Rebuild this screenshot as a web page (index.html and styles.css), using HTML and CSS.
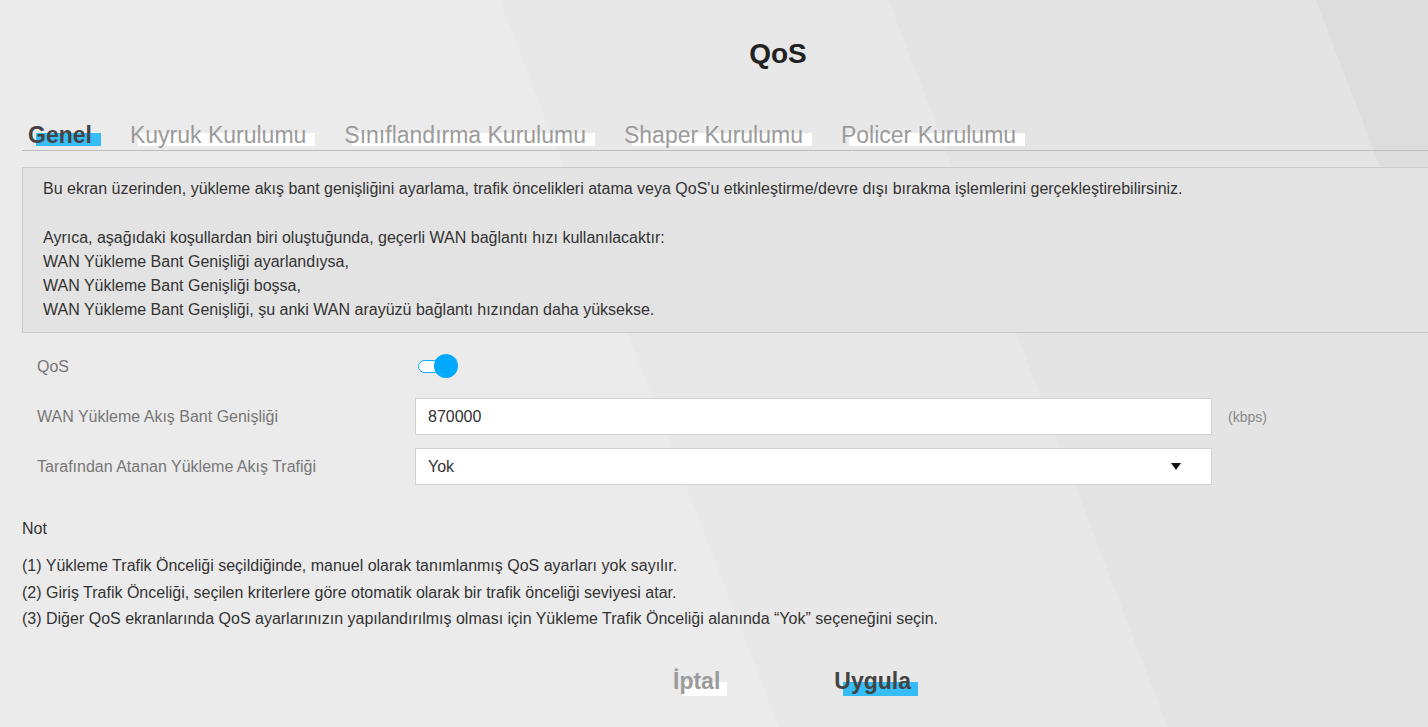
FILE: index.html
```html
<!DOCTYPE html>
<html lang="tr">
<head>
    <meta charset="UTF-8" />
    <meta name="viewport" content="width=device-width, initial-scale=1" />
    <title>QoS</title>
    <link rel="stylesheet" href="styles.css">
</head>
<body>
<div class="page">
    <h1 class="title">QoS</h1>

    <ul class="tabs">
        <li class="tab active">Genel</li>
        <li class="tab">Kuyruk Kurulumu</li>
        <li class="tab">Sınıflandırma Kurulumu</li>
        <li class="tab">Shaper Kurulumu</li>
        <li class="tab">Policer Kurulumu</li>
    </ul>

    <div class="intro">
        <p>Bu ekran üzerinden, yükleme akış bant genişliğini ayarlama, trafik öncelikleri atama veya QoS'u etkinleştirme/devre dışı bırakma işlemlerini gerçekleştirebilirsiniz.</p>
        <p>Ayrıca, aşağıdaki koşullardan biri oluştuğunda, geçerli WAN bağlantı hızı kullanılacaktır:<br>
            WAN Yükleme Bant Genişliği ayarlandıysa,<br>
            WAN Yükleme Bant Genişliği boşsa,<br>
            WAN Yükleme Bant Genişliği, şu anki WAN arayüzü bağlantı hızından daha yüksekse.</p>
    </div>

    <div class="form">
        <div class="row">
            <label>QoS</label>
            <span class="switch on"><span class="knob"></span></span>
        </div>
        <div class="row">
            <label for="upstream">WAN Yükleme Akış Bant Genişliği</label>
            <input type="text" id="upstream" class="field" value="870000" />
            <span class="unit">(kbps)</span>
        </div>
        <div class="row">
            <label>Tarafından Atanan Yükleme Akış Trafiği</label>
            <div class="field select">
                <span>Yok</span>
                <svg width="10" height="7" viewBox="0 0 10 7"><path d="M0 0 H10 L5 7 Z" fill="#111"/></svg>
            </div>
        </div>
    </div>

    <div class="notes">
        <p class="notes-title">Not</p>
        <p>(1) Yükleme Trafik Önceliği seçildiğinde, manuel olarak tanımlanmış QoS ayarları yok sayılır.</p>
        <p>(2) Giriş Trafik Önceliği, seçilen kriterlere göre otomatik olarak bir trafik önceliği seviyesi atar.</p>
        <p>(3) Diğer QoS ekranlarında QoS ayarlarınızın yapılandırılmış olması için Yükleme Trafik Önceliği alanında “Yok” seçeneğini seçin.</p>
    </div>

    <div class="actions">
        <button class="btn">İptal</button>
        <button class="btn primary">Uygula</button>
    </div>
</div>
</body>
</html>
```

FILE: styles.css
```css
html {
    background: linear-gradient(69deg, #ebebeb 0, #ebebeb 727px, #e8e8e8 727px, #e8e8e8 1090px, #e4e4e4 1090px, #e4e4e4 1489px, #dddddd 1489px);
    min-height: 100%;
}
body {
    margin: 0;
    overflow: hidden;
    font-family: 'Liberation Sans', Arial, sans-serif;
    color: #333;
}
.page {
    margin-left: 22px;
    width: 1512px;
}
.title {
    margin: 37px 0 50px;
    font-size: 28px;
    line-height: 34px;
    text-align: center;
    color: #222;
}
.tabs {
    display: flex;
    gap: 38px;
    list-style: none;
    margin: 0;
    padding: 0 0 0 6px;
    border-bottom: 1px solid #bdbdbd;
}
.tab {
    position: relative;
    font-size: 23px;
    line-height: 29px;
    color: #9b9b9b;
}
.tab::after {
    content: "";
    position: absolute;
    left: 8px;
    right: -9px;
    top: 12px;
    height: 13px;
    background: #fff;
    z-index: -1;
}
.tab.active {
    font-weight: bold;
    color: #444;
}
.tab.active::after {
    background: #36bdf8;
}
.intro {
    margin-top: 16px;
    padding: 9px 20px 10px;
    border: 1px solid #cacaca;
    background: #e3e3e3;
    font-size: 16px;
    line-height: 24px;
}
.intro p {
    margin: 0;
}
.intro p + p {
    margin-top: 25px;
}
.form {
    margin-top: 15px;
    display: flex;
    flex-direction: column;
    gap: 13px;
}
.row {
    display: flex;
    align-items: center;
    height: 37px;
    padding-left: 15px;
}
.row label {
    width: 378px;
    font-size: 16px;
    color: #777;
}
.switch {
    position: relative;
    width: 22px;
    height: 11px;
    margin-left: 3px;
    border: 1.5px solid #00a8ff;
    border-radius: 8px;
    background: #fff;
}
.switch .knob {
    position: absolute;
    right: -17px;
    top: -7.5px;
    width: 24px;
    height: 24px;
    border-radius: 50%;
    background: #00a8ff;
}
.field {
    box-sizing: border-box;
    width: 797px;
    height: 37px;
    padding: 0 12px;
    border: 1px solid #cfd2d8;
    background: #fff;
    font-family: inherit;
    font-size: 16px;
    color: #333;
}
.select {
    display: flex;
    align-items: center;
    justify-content: space-between;
    padding-right: 30px;
}
.unit {
    margin-left: 16px;
    font-size: 14px;
    color: #888;
}
.notes {
    margin-top: 32px;
    font-size: 16px;
}
.notes p {
    margin: 0;
    line-height: 26.5px;
}
.notes .notes-title {
    line-height: 24px;
    margin-bottom: 12px;
}
.actions {
    display: flex;
    justify-content: center;
    gap: 114px;
    margin-top: 33px;
    padding-left: 28px;
}
.btn {
    position: relative;
    padding: 0;
    border: none;
    background: none;
    font-family: inherit;
    font-size: 23px;
    font-weight: bold;
    line-height: 30px;
    color: #9b9b9b;
    cursor: pointer;
}
.btn::after {
    content: "";
    position: absolute;
    left: 9px;
    right: -7px;
    top: 16px;
    height: 17px;
    background: #fff;
    z-index: -1;
}
.btn.primary {
    color: #444;
}
.btn.primary::after {
    background: #36bdf8;
}
```
